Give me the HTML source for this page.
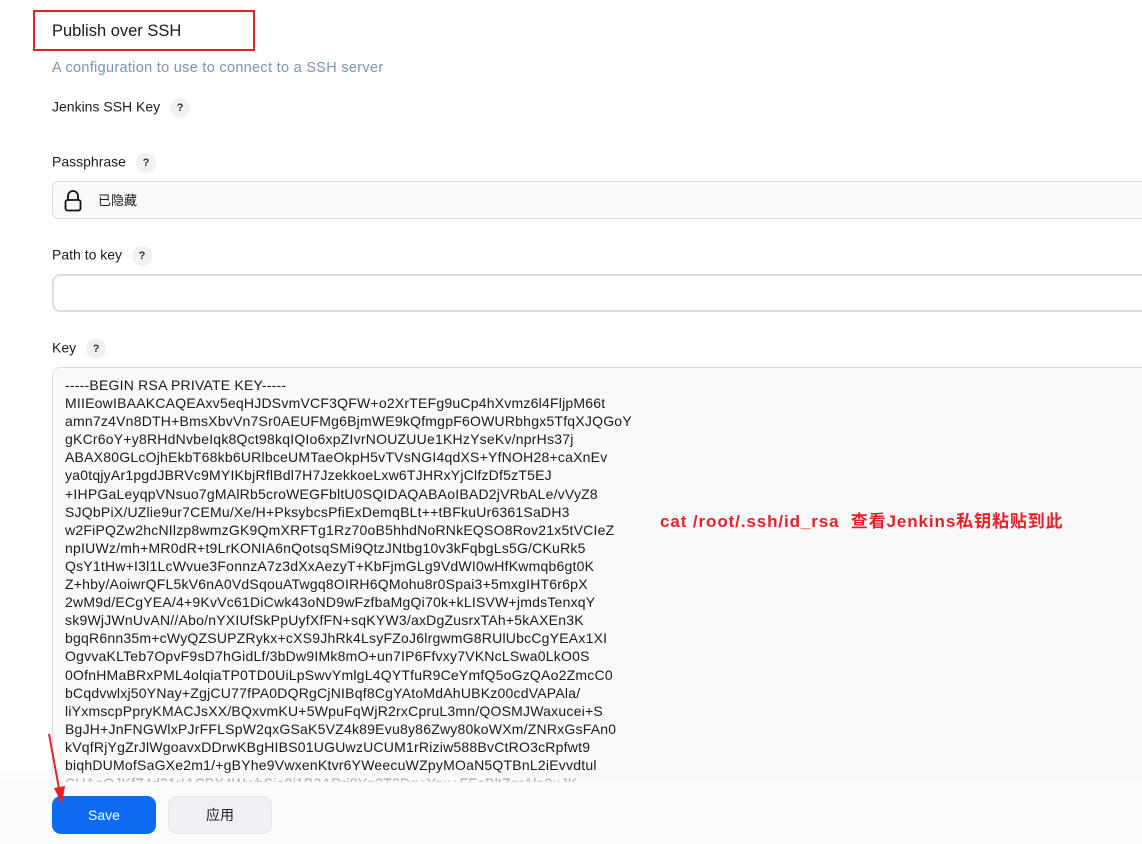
<!DOCTYPE html>
<html><head><meta charset="utf-8">
<style>
*{box-sizing:border-box;margin:0;padding:0}
body{width:1142px;height:844px;overflow:hidden;background:#fff;font-family:"Liberation Sans","Noto Sans CJK SC",sans-serif;color:#1a1a1f;position:relative}
.abs{position:absolute}
.lbl{font-size:14px;left:52px}
.q{display:inline-block;width:20px;height:20px;border-radius:50%;background:#f0f1f4;font-size:11px;font-weight:bold;text-align:center;line-height:20px;margin-left:10px;vertical-align:middle;color:#333}
.field{left:52px;width:1100px;height:38px;border:1px solid #dcdde2;border-radius:6px;background:#f9f9fa}
pre{font-family:"Liberation Sans",sans-serif;font-size:14px;letter-spacing:0.22px;line-height:18.1px;color:#1a1a1f}
</style></head><body>
<div class="abs" style="left:33px;top:10px;width:222px;height:41px;border:2px solid #e3232b"></div>
<div class="abs" style="left:52px;top:22px;font-size:16.5px">Publish over SSH</div>
<div class="abs" style="left:52px;top:60px;font-size:14.5px;letter-spacing:0.3px;color:#7b93b8">A configuration to use to connect to a SSH server</div>
<div class="abs lbl" style="top:98px">Jenkins SSH Key<span class="q">?</span></div>
<div class="abs lbl" style="top:153px">Passphrase<span class="q">?</span></div>
<div class="abs field" style="top:181px">
<svg class="abs" style="left:11px;top:8px" width="18" height="22" viewBox="0 0 18 22"><path d="M4 10V6a5 5 0 0 1 10 0v4" fill="none" stroke="#111" stroke-width="1.8"/><rect x="1.5" y="10" width="15" height="10.5" rx="2" fill="none" stroke="#111" stroke-width="1.8"/></svg>
<span class="abs" style="left:45px;top:8px;font-size:13px">已隐藏</span></div>
<div class="abs lbl" style="top:246px">Path to key<span class="q">?</span></div>
<div class="abs field" style="top:274px;background:#fff;border-width:2px;border-radius:8px"></div>
<div class="abs lbl" style="top:339px">Key<span class="q">?</span></div>
<div class="abs" style="left:52px;top:367px;width:1100px;height:430px;border:1px solid #dcdde2;border-radius:8px;background:#f9f9fa;overflow:hidden">
<pre style="position:absolute;left:12px;top:8px">-----BEGIN RSA PRIVATE KEY-----
MIIEowIBAAKCAQEAxv5eqHJDSvmVCF3QFW+o2XrTEFg9uCp4hXvmz6l4FljpM66t
amn7z4Vn8DTH+BmsXbvVn7Sr0AEUFMg6BjmWE9kQfmgpF6OWURbhgx5TfqXJQGoY
gKCr6oY+y8RHdNvbeIqk8Qct98kqIQIo6xpZIvrNOUZUUe1KHzYseKv/nprHs37j
ABAX80GLcOjhEkbT68kb6URlbceUMTaeOkpH5vTVsNGI4qdXS+YfNOH28+caXnEv
ya0tqjyAr1pgdJBRVc9MYIKbjRflBdl7H7JzekkoeLxw6TJHRxYjClfzDf5zT5EJ
+IHPGaLeyqpVNsuo7gMAlRb5croWEGFbltU0SQIDAQABAoIBAD2jVRbALe/vVyZ8
SJQbPiX/UZlie9ur7CEMu/Xe/H+PksybcsPfiExDemqBLt++tBFkuUr6361SaDH3
w2FiPQZw2hcNIlzp8wmzGK9QmXRFTg1Rz70oB5hhdNoRNkEQSO8Rov21x5tVCIeZ
npIUWz/mh+MR0dR+t9LrKONIA6nQotsqSMi9QtzJNtbg10v3kFqbgLs5G/CKuRk5
QsY1tHw+I3l1LcWvue3FonnzA7z3dXxAezyT+KbFjmGLg9VdWI0wHfKwmqb6gt0K
Z+hby/AoiwrQFL5kV6nA0VdSqouATwgq8OIRH6QMohu8r0Spai3+5mxgIHT6r6pX
2wM9d/ECgYEA/4+9KvVc61DiCwk43oND9wFzfbaMgQi70k+kLISVW+jmdsTenxqY
sk9WjJWnUvAN//Abo/nYXIUfSkPpUyfXfFN+sqKYW3/axDgZusrxTAh+5kAXEn3K
bgqR6nn35m+cWyQZSUPZRykx+cXS9JhRk4LsyFZoJ6lrgwmG8RUlUbcCgYEAx1XI
OgvvaKLTeb7OpvF9sD7hGidLf/3bDw9IMk8mO+un7IP6Ffvxy7VKNcLSwa0LkO0S
0OfnHMaBRxPML4olqiaTP0TD0UiLpSwvYmlgL4QYTfuR9CeYmfQ5oGzQAo2ZmcC0
bCqdvwlxj50YNay+ZgjCU77fPA0DQRgCjNIBqf8CgYAtoMdAhUBKz00cdVAPAla/
liYxmscpPpryKMACJsXX/BQxvmKU+5WpuFqWjR2rxCpruL3mn/QOSMJWaxucei+S
BgJH+JnFNGWlxPJrFFLSpW2qxGSaK5VZ4k89Evu8y86Zwy80koWXm/ZNRxGsFAn0
kVqfRjYgZrJlWgoavxDDrwKBgHIBS01UGUwzUCUM1rRiziw588BvCtRO3cRpfwt9
biqhDUMofSaGXe2m1/+gBYhe9VwxenKtvr6YWeecuWZpyMOaN5QTBnL2iEvvdtul
CUAoOJKfZ4d31rIACBX4WwbSjo8j1B3ARri8Yn2T2Dq+You+FEcBltZgrAla0uJK</pre>
</div>
<div class="abs" style="left:660px;top:507px;font-size:17px;letter-spacing:0.9px;font-weight:bold;color:#e8202a;font-family:'Liberation Sans','Noto Sans CJK SC',sans-serif">cat /root/.ssh/id_rsa&nbsp; 查看Jenkins私钥粘贴到此</div>
<div class="abs" style="left:0;top:770px;width:1142px;height:14px;background:linear-gradient(rgba(255,255,255,0),rgba(250,250,251,0.9))"></div>
<div class="abs" style="left:0;top:782px;width:1142px;height:62px;background:#fbfbfc"></div>
<div class="abs" style="left:52px;top:796px;width:104px;height:38px;border-radius:9px;background:#0b6cf3;color:#fff;font-size:14px;text-align:center;line-height:38px">Save</div>
<div class="abs" style="left:168px;top:796px;width:104px;height:38px;border-radius:9px;background:#eef0f3;border:1px solid #e3e5e9;color:#222;font-size:14px;text-align:center;line-height:36px">应用</div>
<svg class="abs" style="left:40px;top:728px" width="30" height="80" viewBox="0 0 30 80"><line x1="9" y1="6" x2="20" y2="66" stroke="#e8202a" stroke-width="2"/><path d="M14 60 L22 76 L25 58 Z" fill="#e8202a"/></svg>
</body></html>
